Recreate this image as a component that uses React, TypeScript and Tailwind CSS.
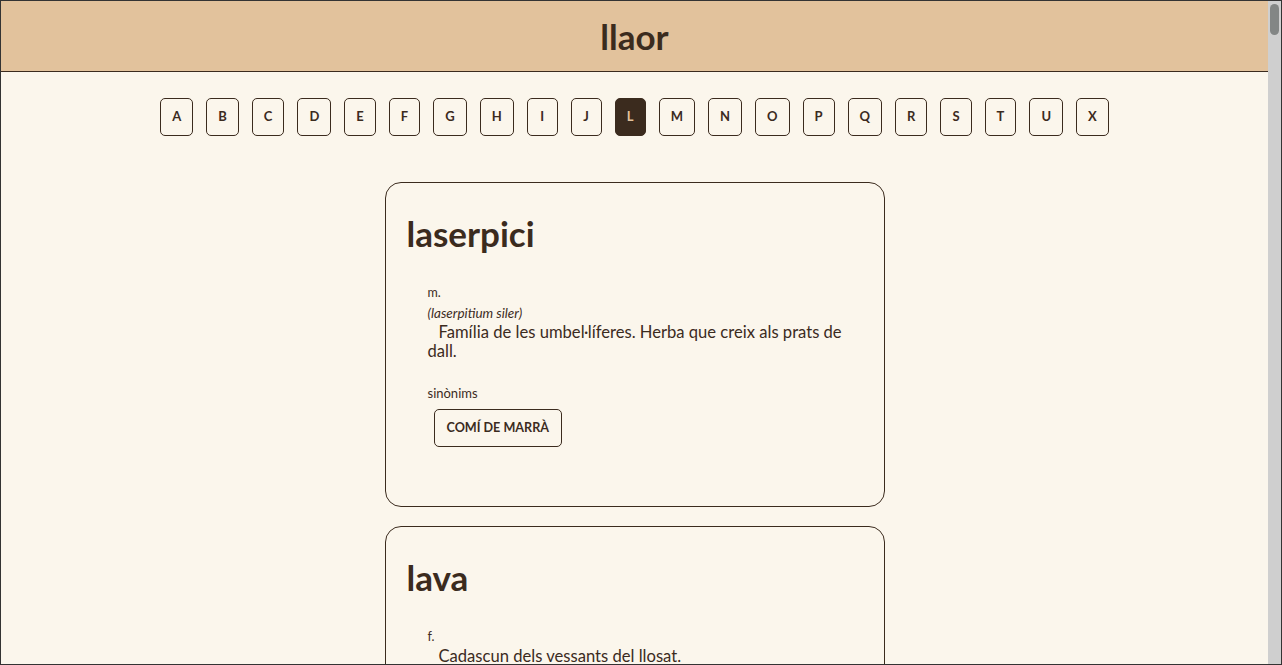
import React from "react";

const LETTERS = ["A", "B", "C", "D", "E", "F", "G", "H", "I", "J", "L", "M", "N", "O", "P", "Q", "R", "S", "T", "U", "X"];

type Entry = {
  word: string;
  gender: string;
  latin?: string;
  definition: string;
  synonyms?: string[];
};

const ENTRIES: Entry[] = [
  {
    word: "laserpici",
    gender: "m.",
    latin: "(laserpitium siler)",
    definition: "Família de les umbel·líferes. Herba que creix als prats de dall.",
    synonyms: ["comí de marrà"],
  },
  {
    word: "lava",
    gender: "f.",
    definition: "Cadascun dels vessants del llosat.",
  },
];

function LetterNav({ active }: { active: string }) {
  return (
    <nav className="mt-[26px] flex justify-center gap-[13px]">
      {LETTERS.map((l) => (
        <button
          key={l}
          className={
            l === active
              ? "h-[38px] min-w-[31px] rounded-[5px] border border-[#3b2b1e] bg-[#3b2b1e] px-[11px] text-[13px] font-bold text-[#e2c29c]"
              : "h-[38px] min-w-[31px] rounded-[5px] border border-[#3b2b1e] px-[11px] text-[13px] font-bold text-[#3b2b1e]"
          }
        >
          {l}
        </button>
      ))}
    </nav>
  );
}

function EntryCard({ entry }: { entry: Entry }) {
  return (
    <article className="w-[500px] rounded-[16px] border border-[#3b2b1e] px-[21px] pt-[30px] pb-[59px]">
      <h2 className="text-[35px] leading-[40px] font-bold">{entry.word}</h2>
      <div className="mt-[30px] pl-[21px]">
        <p className="text-[12.5px] leading-[20px]">{entry.gender}</p>
        {entry.latin && <p className="text-[13.5px] leading-[20px] italic">{entry.latin}</p>}
        <p className="indent-[11px] text-[16.6px] leading-[19px]">{entry.definition}</p>
        {entry.synonyms && (
          <div className="mt-[22px]">
            <p className="text-[13px] leading-[20px]">sinònims</p>
            <div className="mt-[6px] flex gap-2 pl-[6px]">
              {entry.synonyms.map((s) => (
                <button
                  key={s}
                  className="h-[38px] rounded-[5px] border border-[#3b2b1e] px-[12px] text-[12.6px] font-bold uppercase"
                >
                  {s}
                </button>
              ))}
            </div>
          </div>
        )}
      </div>
    </article>
  );
}

function Scrollbar() {
  return (
    <div className="w-[13px] shrink-0 bg-[#cfcfcf] px-[2px] pt-[3px]">
      <div className="h-[31px] rounded-full bg-[#838685]" />
    </div>
  );
}

export default function App() {
  return (
    <div className="flex h-screen border border-[#333333] bg-[#fbf6ec] font-['Lato',sans-serif] text-[#3b2b1e]">
      <div className="min-w-0 flex-1 overflow-hidden">
        <header className="flex h-[71px] items-center justify-center border-b border-[#3b2b1e] bg-[#e2c29c]">
          <h1 className="text-[35px] font-bold">llaor</h1>
        </header>
        <LetterNav active="L" />
        <main className="mt-[46px] flex flex-col items-center gap-[19px] pb-[40px]">
          {ENTRIES.map((e) => (
            <EntryCard key={e.word} entry={e} />
          ))}
        </main>
      </div>
      <Scrollbar />
    </div>
  );
}
